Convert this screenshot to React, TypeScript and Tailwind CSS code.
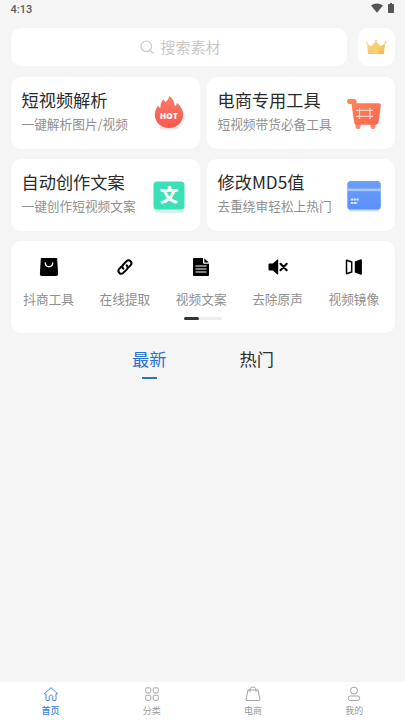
import React from 'react';

const HotIcon = () => (
    <svg width="34" height="40" viewBox="0 0 34 40">
        <defs>
            <linearGradient id="hot" x1="0" y1="0" x2="0" y2="1">
                <stop offset="0" stopColor="#fb7a68" />
                <stop offset="1" stopColor="#f9584f" />
            </linearGradient>
        </defs>
        <ellipse cx="17" cy="34.500" rx="10" ry="2.500" fill="#fde4e1" />
        <path d="M17.500 3c3 2 4.800 6 5.300 10.300 1.300-.7 2-1.800 2.200-3.600 3.500 3.400 6.200 7 6.200 11.800C31.200 29.500 25 35 17 35S2.800 29.500 2.800 21.500c0-3.500 1.500-6.200 3.200-8.800.7 1.200 1.400 1.900 2.400 2.200 0-3.800.8-6.600 3.100-8.600.4 1.200 1.100 2 2.100 2.600 1.700-1.400 3.200-3.300 3.900-5.900z" fill="url(#hot)" />
        <text x="17" y="26" textAnchor="middle" fontFamily="Open Sans, Noto Sans, sans-serif" fontWeight="800" fontSize="8" letterSpacing="0.3" fill="#fff">HOT</text>
    </svg>
);

const CartIcon = () => (
    <svg width="38" height="40" viewBox="0 0 38 40">
        <defs>
            <linearGradient id="cart" x1="0" y1="0" x2="1" y2="1">
                <stop offset="0" stopColor="#fb8a5c" />
                <stop offset="1" stopColor="#fb6450" />
            </linearGradient>
        </defs>
        <rect x="10.500" y="29" width="5" height="7" rx="2.300" fill="#fb8a70" />
        <rect x="25.500" y="29" width="5" height="7" rx="2.300" fill="#fb8a70" />
        <path d="M4 6h5.500c1.200 0 1.800.8 2 2l.3 2.200H33.500c1.700 0 2.500 1 2.300 2.500L33.500 29c-.3 1.800-1.200 2.700-3 2.700H12c-1.700 0-2.600-.8-2.900-2.500L6.500 11H4C1.500 11 1.500 6 4 6z" fill="url(#cart)" />
        <path d="M11 17.300h17M11 23.300h17M14.500 14.700v11.300M25 14.700v11.300" stroke="#ffd3c4" strokeWidth="1.200" fill="none" />
    </svg>
);

const TextIcon = () => (
    <svg width="34" height="40" viewBox="0 0 34 40">
        <rect x="2" y="10" width="30" height="28" rx="4" fill="#d5f8ec" />
        <rect x="1.500" y="6.500" width="31" height="28" rx="3.500" fill="#3be0b6" />
        <text x="17" y="27" textAnchor="middle" fontFamily="Noto Sans CJK SC, sans-serif" fontWeight="900" fontSize="18.500" fill="#fff">文</text>
    </svg>
);

const CardIcon = () => (
    <svg width="38" height="40" viewBox="0 0 38 40">
        <defs>
            <linearGradient id="card" x1="0" y1="0" x2="0" y2="1">
                <stop offset="0" stopColor="#6a9efb" />
                <stop offset="1" stopColor="#5a90fa" />
            </linearGradient>
        </defs>
        <rect x="3" y="9" width="32" height="27.500" rx="3.500" fill="#cfe0fe" />
        <rect x="2.300" y="6" width="33.500" height="28.500" rx="3.500" fill="url(#card)" />
        <rect x="2.300" y="13.500" width="33.500" height="2.600" fill="#a9c8fe" />
        <path d="M5.800 24.500h8.500M5.800 28h6.500" stroke="#dce8ff" strokeWidth="1.800" strokeDasharray="2.300 .5" />
    </svg>
);

const ShopIcon = () => (
    <svg width="20" height="20" viewBox="0 0 20 20">
        <path d="M2.900 1h14.200c.7 0 1 .3 1.100 1l.9 14.800c.1 1.400-.6 2.200-2 2.200H2.900c-1.400 0-2.100-.8-2-2.200L1.800 2c.1-.7.400-1 1.100-1z" />
        <path d="M6.300 6c.4 5 7 5 7.400 0" fill="none" stroke="#fff" strokeWidth="1.400" strokeLinecap="round" />
    </svg>
);

const LinkIcon = () => (
    <svg width="20" height="20" viewBox="0 0 20 20">
        <g fill="none" stroke="#000" strokeWidth="2" strokeLinecap="round">
            <path d="M8.300 11.800c-1.300-1.300-1.300-3 0-4.300l3.200-3.200c2.800-2.600 6.600 1 4.200 3.900l-2.400 2.400" />
            <path d="M11.600 8.300c1.300 1.300 1.300 3 0 4.300l-3.200 3.200c-2.800 2.600-6.600-1-4.200-3.900l2.400-2.400" />
        </g>
    </svg>
);

const DocIcon = () => (
    <svg width="20" height="20" viewBox="0 0 20 20">
        <path d="M3.200 1H12v4.500c0 .8.500 1.300 1.300 1.300H18v11c0 .8-.4 1.200-1.200 1.200H3.200c-.8 0-1.200-.4-1.200-1.200V2.200C2 1.400 2.400 1 3.200 1z" />
        <path d="M13.300 1.200L17.800 5.600h-4.500z" />
        <path d="M4.500 9h11M4.500 12h11M4.500 15h11" stroke="#fff" strokeWidth="1" />
    </svg>
);

const MuteIcon = () => (
    <svg width="20" height="20" viewBox="0 0 20 20">
        <path d="M1.500 6.500h3.300L9 2.700c.6-.5 1.200-.3 1.200.5v13.600c0 .8-.6 1-1.200.5l-4.200-3.800H1.500c-.7 0-1-.3-1-1v-5c0-.7.300-1 1-1z" />
        <path d="M12.500 6.800l6.200 6.400M18.700 6.800l-6.200 6.400" stroke="#000" strokeWidth="2" strokeLinecap="round" />
    </svg>
);

const MirrorIcon = () => (
    <svg width="20" height="20" viewBox="0 0 20 20">
        <path d="M2.500 3.300l5.200 1.700v10l-5.200 1.700z" fill="none" stroke="#000" strokeWidth="1.500" strokeLinejoin="round" />
        <path d="M10.800 4.400l6-2.100c.7-.2 1.100 0 1.100.7v14c0 .7-.4.900-1.100.7l-6-2.100z" />
    </svg>
);

const CrownIcon = () => (
    <svg width="22" height="18" viewBox="0 0 22 18">
        <defs>
            <linearGradient id="crown" x1="0" y1="0" x2="1" y2="1">
                <stop offset="0" stopColor="#fbdc93" />
                <stop offset="1" stopColor="#f2b650" />
            </linearGradient>
        </defs>
        <path d="M2 5.200l4.300 3.300L11 3.300l4.700 5.200L20 5.200 18.900 16H3.100z" fill="url(#crown)" />
        <path d="M11 3.300l4.700 5.200-3 7.500H7.500l-1.200-7.500z" fill="#f9cd74" />
        <circle cx="11" cy="2.600" r="1" fill="#f7cf80" />
        <circle cx="1.600" cy="4.700" r=".9" fill="#f7cf80" />
        <circle cx="20.400" cy="4.700" r=".9" fill="#efc070" />
    </svg>
);

const features = [
    { title: '短视频解析', desc: '一键解析图片/视频', icon: <HotIcon />, pad: 'pr-[14px]' },
    { title: '电商专用工具', desc: '短视频带货必备工具', icon: <CartIcon />, pad: 'pr-[12px]' },
    { title: '自动创作文案', desc: '一键创作短视频文案', icon: <TextIcon />, pad: 'pr-[14px]' },
    { title: '修改MD5值', desc: '去重绕审轻松上热门', icon: <CardIcon />, pad: 'pr-[12px]' },
];

const tools = [
    { label: '抖商工具', icon: <ShopIcon /> },
    { label: '在线提取', icon: <LinkIcon /> },
    { label: '视频文案', icon: <DocIcon /> },
    { label: '去除原声', icon: <MuteIcon /> },
    { label: '视频镜像', icon: <MirrorIcon /> },
];

const navItems = [
    { label: '首页', active: true, icon: <path d="M3 7.800H1.300L8 1.700l6.700 6.100H13v5.700c0 .6-.3 1-1 1H9.800v-3.700c0-2.200-3.600-2.200-3.600 0v3.700H4c-.7 0-1-.4-1-1z" /> },
    {
        label: '分类',
        active: false,
        icon: (
            <>
                <rect x="1.600" y="1.800" width="5.200" height="5.200" rx="1.500" />
                <rect x="9.200" y="1.800" width="5.200" height="5.200" rx="1.500" />
                <rect x="1.600" y="9.200" width="5.200" height="5.200" rx="1.500" />
                <rect x="9.200" y="9.200" width="5.200" height="5.200" rx="1.500" />
            </>
        ),
    },
    { label: '电商', active: false, icon: <path d="M3 4h10l1.900 9.300c.1.700-.2 1.200-.9 1.200H2c-.7 0-1-.5-.9-1.200zM5 6.300V4c0-4 6-4 6 0v2.300" /> },
    {
        label: '我的',
        active: false,
        icon: (
            <>
                <circle cx="8" cy="4.600" r="3.500" />
                <rect x="2.300" y="10" width="11.400" height="4.600" rx="2" />
            </>
        ),
    },
];

export default function App() {
    return (
        <div className="flex flex-col w-[405px] h-[720px] bg-[#f5f5f5] overflow-hidden font-['Noto_Sans_CJK_SC',sans-serif]">
            {/* Status bar */}
            <div className="flex items-center justify-between h-[28px] pl-[10.5px] pr-[11px] pb-[9px]">
                <span className="font-['Roboto',sans-serif] text-[11px] leading-[18px] font-medium text-[#5c5c5c]">4:13</span>
                <div className="flex items-center gap-[5px] pb-[3px]">
                    <svg width="12" height="10" viewBox="0 0 12 10" fill="#555">
                        <path d="M0 2.600C3.300-.3 8.700-.3 12 2.600L6 9.800z" />
                    </svg>
                    <svg width="6" height="10" viewBox="0 0 6 10" fill="#555">
                        <path d="M2 0h2v1h1.300c.4 0 .7.300.7.700v7.600c0 .4-.3.700-.7.700H.7c-.4 0-.7-.3-.7-.7V1.700C0 1.300.3 1 .7 1H2z" />
                    </svg>
                </div>
            </div>

            {/* Search */}
            <div className="flex gap-[11px] px-[10.5px] h-[38px]">
                <div className="flex flex-1 items-center justify-center gap-[6px] rounded-[10px] bg-white pl-[4px]">
                    <svg width="14" height="14" viewBox="0 0 14 14" fill="none" stroke="#c9c9c9" strokeWidth="1.200" strokeLinecap="round">
                        <circle cx="6.300" cy="6.300" r="5.300" />
                        <path d="M10.300 10.300l2.900 2.900" />
                    </svg>
                    <span className="text-[15px] leading-[22px] text-[#c9c9c9]">搜索素材</span>
                </div>
                <div className="flex w-[37px] items-center justify-center rounded-[10px] bg-white">
                    <CrownIcon />
                </div>
            </div>

            {/* Feature cards */}
            <div className="grid grid-cols-[189px_188px] gap-x-[7px] gap-y-[10.500px] mt-[11px] pl-[10.5px]">
                {features.map((f) => (
                    <div key={f.title} className={`flex items-center justify-between h-[71.500px] pl-[11px] rounded-[10px] bg-white ${f.pad}`}>
                        <div className="whitespace-nowrap pb-[3px]">
                            <div className="text-[17.200px] leading-[24px] text-[#2b2b2b]">{f.title}</div>
                            <div className="mt-[2px] text-[12.700px] leading-[20px] text-[#8f8f8f]">{f.desc}</div>
                        </div>
                        {f.icon}
                    </div>
                ))}
            </div>

            {/* Tools */}
            <div className="mx-[10.5px] mt-[10.500px] h-[92px] shrink-0 rounded-[10px] bg-white pt-[16px]">
                <div className="grid grid-cols-5 w-[381.500px]">
                    {tools.map((t) => (
                        <div key={t.label} className="flex flex-col items-center">
                            {t.icon}
                            <span className="mt-[12px] text-[12.700px] leading-[20px] text-[#8f8f8f]">{t.label}</span>
                        </div>
                    ))}
                </div>
                <div className="mx-auto mt-[8px] h-[3px] w-[38px] rounded-full bg-[#eeeeee]">
                    <div className="h-full w-[15px] rounded-full bg-[#333]" />
                </div>
            </div>

            {/* Tabs */}
            <div className="flex flex-1 items-start justify-center gap-[73px] pt-[14px] pl-[1px] text-[17.200px] leading-[24px] text-[#2b2b2b]">
                <div className="flex flex-col items-center text-[#2873d2]">
                    <span>最新</span>
                    <span className="mt-[6px] h-[2px] w-[15px] bg-[#2873d2]" />
                </div>
                <span>热门</span>
            </div>

            {/* Bottom navigation */}
            <div className="grid grid-cols-4 h-[38px] bg-white pt-[4px]">
                {navItems.map((n) => (
                    <div key={n.label} className={`flex flex-col items-center ${n.active ? 'text-[#3b82dc] font-medium' : 'text-[#999]'}`}>
                        <svg width="16" height="16" viewBox="0 0 16 16" fill="none" stroke="currentColor" strokeWidth="0.900" strokeLinejoin="round">
                            {n.icon}
                        </svg>
                        <span className="mt-[2px] text-[9px] leading-[14px]">{n.label}</span>
                    </div>
                ))}
            </div>
        </div>
    );
}
